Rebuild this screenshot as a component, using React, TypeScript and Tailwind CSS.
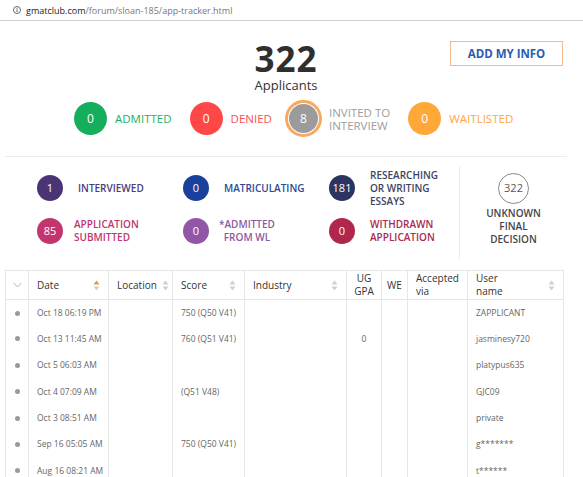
import React from 'react';

const font = { fontFamily: '"Open Sans", "Liberation Sans", sans-serif' };

const topStats = [
  { n: '0', label: 'ADMITTED', circle: 'bg-[#14ae5c]', text: 'text-[#1caf60]' },
  { n: '0', label: 'DENIED', circle: 'bg-[#ff4747]', text: 'text-[#ff4d4f]' },
];

const midStats = [
  { n: '1', label: 'INTERVIEWED', circle: 'bg-[#4a3475]', text: 'text-[#4b3c78]', pad: 'pl-[15px]' },
  { n: '0', label: 'MATRICULATING', circle: 'bg-[#1b409c]', text: 'text-[#2a4a98]', pad: 'pl-[15px]' },
  { n: '181', label: 'RESEARCHING\nOR WRITING\nESSAYS', circle: 'bg-[#2c345f]', text: 'text-[#3c4462]', pad: 'pl-[15px]' },
  { n: '85', label: 'APPLICATION\nSUBMITTED', circle: 'bg-[#c2366f]', text: 'text-[#c03570]', pad: 'pl-[11px]' },
  { n: '0', label: '*ADMITTED\nFROM WL', circle: 'bg-[#9157a6]', text: 'text-[#8c5aa2] text-center', pad: 'pl-[10px]' },
  { n: '0', label: 'WITHDRAWN\nAPPLICATION', circle: 'bg-[#b1264b]', text: 'text-[#a92a4c]', pad: 'pl-[15px]' },
];

const rows = [
  { date: 'Oct 18 06:19 PM', score: '750 (Q50 V41)', gpa: '', user: 'ZAPPLICANT' },
  { date: 'Oct 13 11:45 AM', score: '760 (Q51 V41)', gpa: '0', user: 'jasminesy720' },
  { date: 'Oct 5 06:03 AM', score: '', gpa: '', user: 'platypus635' },
  { date: 'Oct 4 07:09 AM', score: '(Q51 V48)', gpa: '', user: 'GJC09' },
  { date: 'Oct 3 08:51 AM', score: '', gpa: '', user: 'private' },
  { date: 'Sep 16 05:05 AM', score: '750 (Q50 V41)', gpa: '', user: 'g*******' },
  { date: 'Aug 16 08:21 AM', score: '', gpa: '', user: 't******' },
];

const SortIcon = ({ active = false }: { active?: boolean }) => (
  <svg width="7" height="11" viewBox="0 0 7 11" className="shrink-0">
    <path d="M3.5 0.5 L6.5 4.5 L0.5 4.5 Z" fill={active ? '#f5913d' : '#cfcfcf'} />
    <path d="M3.5 10.5 L6.5 6.5 L0.5 6.5 Z" fill="#cfcfcf" />
  </svg>
);

const Th = ({ children, sort, active }: { children: React.ReactNode; sort?: 'right' | 'inline'; active?: boolean }) => (
  <th className="border border-[#e6e6e6] px-[8px] text-left align-middle text-[10px] font-normal leading-[13px] text-[#333]">
    <div className={sort === 'right' ? 'flex items-center justify-between' : 'flex items-center gap-[5px]'}>
      <span className="whitespace-pre-line">{children}</span>
      {sort && <SortIcon active={active} />}
    </div>
  </th>
);

const td = 'border-x border-[#e6e6e6] align-top pt-[7px]';

export default function App() {
  return (
    <div className="h-[477px] w-[583px] overflow-hidden bg-white" style={font}>
      {/* address bar */}
      <div className="flex h-[21px] items-center gap-[5px] border-b border-[#cfcfcf] pl-[13px]">
        <svg width="8" height="8" viewBox="0 0 10 10">
          <circle cx="5" cy="5" r="4.4" fill="none" stroke="#555" strokeWidth="1.1" />
          <rect x="4.4" y="4.2" width="1.2" height="3.3" fill="#555" />
          <rect x="4.4" y="2.3" width="1.2" height="1.2" fill="#555" />
        </svg>
        <span className="text-[9px] leading-none text-[#777]">
          <span className="text-[#222]">gmatclub.com</span>/forum/sloan-185/app-tracker.html
        </span>
      </div>

      <div className="mx-[5px] w-[562px]">
        {/* header */}
        <div className="grid grid-cols-[1fr_auto_1fr] pt-[20px]">
          <div />
          <div className="flex flex-col items-center">
            <div className="text-[35px] font-bold leading-[35px] tracking-[1px] text-[#2f2f2f]">322</div>
            <div className="mt-[1px] text-[13px] leading-[16px] text-[#333]">Applicants</div>
          </div>
          <div className="flex justify-end pr-[4px]">
            <button className="h-[25px] w-[113px] border border-[#f7b98b] text-[11.5px] font-bold text-[#2b5cb0]">
              ADD MY INFO
            </button>
          </div>
        </div>

        {/* main statuses */}
        <div className="flex h-[46px] items-center gap-[18px] pl-[69px] pt-[5px]">
          {topStats.map((s) => (
            <div key={s.label} className="flex items-center gap-[8px]">
              <div className={`flex size-[33px] items-center justify-center rounded-full text-[12px] text-white ${s.circle}`}>
                {s.n}
              </div>
              <span className={`text-[11.5px] font-medium ${s.text}`}>{s.label}</span>
            </div>
          ))}
          <div className="-ml-[5px] flex items-center gap-[7px]">
            <div className="flex size-[37px] items-center justify-center rounded-full border-[3px] border-[#f9a95e]">
              <div className="flex size-[29px] items-center justify-center rounded-full bg-[#9b9b9b] text-[12px] text-white">8</div>
            </div>
            <span className="text-[11.5px] font-medium leading-[13px] text-[#9d9d9d]">
              INVITED TO
              <br />
              INTERVIEW
            </span>
          </div>
          <div className="flex items-center gap-[8px]">
            <div className="flex size-[33px] items-center justify-center rounded-full bg-[#ffa737] text-[12px] text-white">0</div>
            <span className="text-[11.5px] font-medium text-[#ffa63b]">WAITLISTED</span>
          </div>
        </div>

        <div className="mt-[17px] border-t border-[#ececec]" />

        {/* secondary statuses */}
        <div className="flex h-[104px]">
          <div className="grid grid-cols-[146px_146px_130px] grid-rows-[46px_40px] pl-[32px] pt-[8px]">
            {midStats.map((s, i) => (
              <div key={i} className="flex items-center">
                <div className={`flex size-[26px] shrink-0 items-center justify-center rounded-full text-[11px] text-white ${s.circle}`}>
                  {s.n}
                </div>
                <span className={`whitespace-pre-line text-[10px] font-semibold leading-[13px] ${s.pad} ${s.text}`}>{s.label}</span>
              </div>
            ))}
          </div>
          <div className="mt-[9px] mb-[2px] flex flex-1 flex-col items-center border-l border-[#ececec] pt-[7px]">
            <div className="flex size-[31px] items-center justify-center rounded-full border border-[#8a8a8a] text-[11px] text-[#555]">
              322
            </div>
            <div className="mt-[3px] text-center text-[10px] font-semibold leading-[13px] text-[#444]">
              UNKNOWN
              <br />
              FINAL
              <br />
              DECISION
            </div>
          </div>
        </div>

        {/* table */}
        <table className="mt-[9px] w-[558px] table-fixed border-collapse">
          <colgroup>
            <col className="w-[23px]" />
            <col className="w-[80px]" />
            <col className="w-[64px]" />
            <col className="w-[72px]" />
            <col className="w-[102px]" />
            <col className="w-[35px]" />
            <col className="w-[26px]" />
            <col className="w-[60px]" />
            <col className="w-[96px]" />
          </colgroup>
          <thead>
            <tr className="h-[29px]">
              <th className="border border-[#e6e6e6]">
                <svg width="9" height="6" viewBox="0 0 9 6" className="mx-auto">
                  <path d="M0.5 0.8 L4.5 5 L8.5 0.8" fill="none" stroke="#b5b5b5" strokeWidth="1" />
                </svg>
              </th>
              <Th sort="right" active>Date</Th>
              <Th sort="inline">Location</Th>
              <Th sort="right">Score</Th>
              <Th sort="right">Industry</Th>
              <th className="border border-[#e6e6e6] px-[5px] text-center text-[10px] font-normal leading-[13px] text-[#333]">
                UG
                <br />
                GPA
              </th>
              <th className="border border-[#e6e6e6] text-center text-[10px] font-normal text-[#333]">WE</th>
              <Th>{'Accepted\nvia'}</Th>
              <Th sort="right">{'User\nname'}</Th>
            </tr>
          </thead>
          <tbody>
            {rows.map((r) => (
              <tr key={r.date} className="h-[26.4px] text-[8.5px] leading-[12px] text-[#666]">
                <td className={td}>
                  <div className="mx-auto mt-[3.5px] size-[5px] rounded-full bg-[#9a9a9a]" />
                </td>
                <td className={`${td} px-[8px] whitespace-nowrap`}>{r.date}</td>
                <td className={td} />
                <td className={`${td} px-[8px] whitespace-nowrap`}>{r.score}</td>
                <td className={td} />
                <td className={`${td} text-center`}>{r.gpa}</td>
                <td className={td} />
                <td className={td} />
                <td className={`${td} px-[8px] whitespace-nowrap`}>{r.user}</td>
              </tr>
            ))}
          </tbody>
        </table>
      </div>
    </div>
  );
}
